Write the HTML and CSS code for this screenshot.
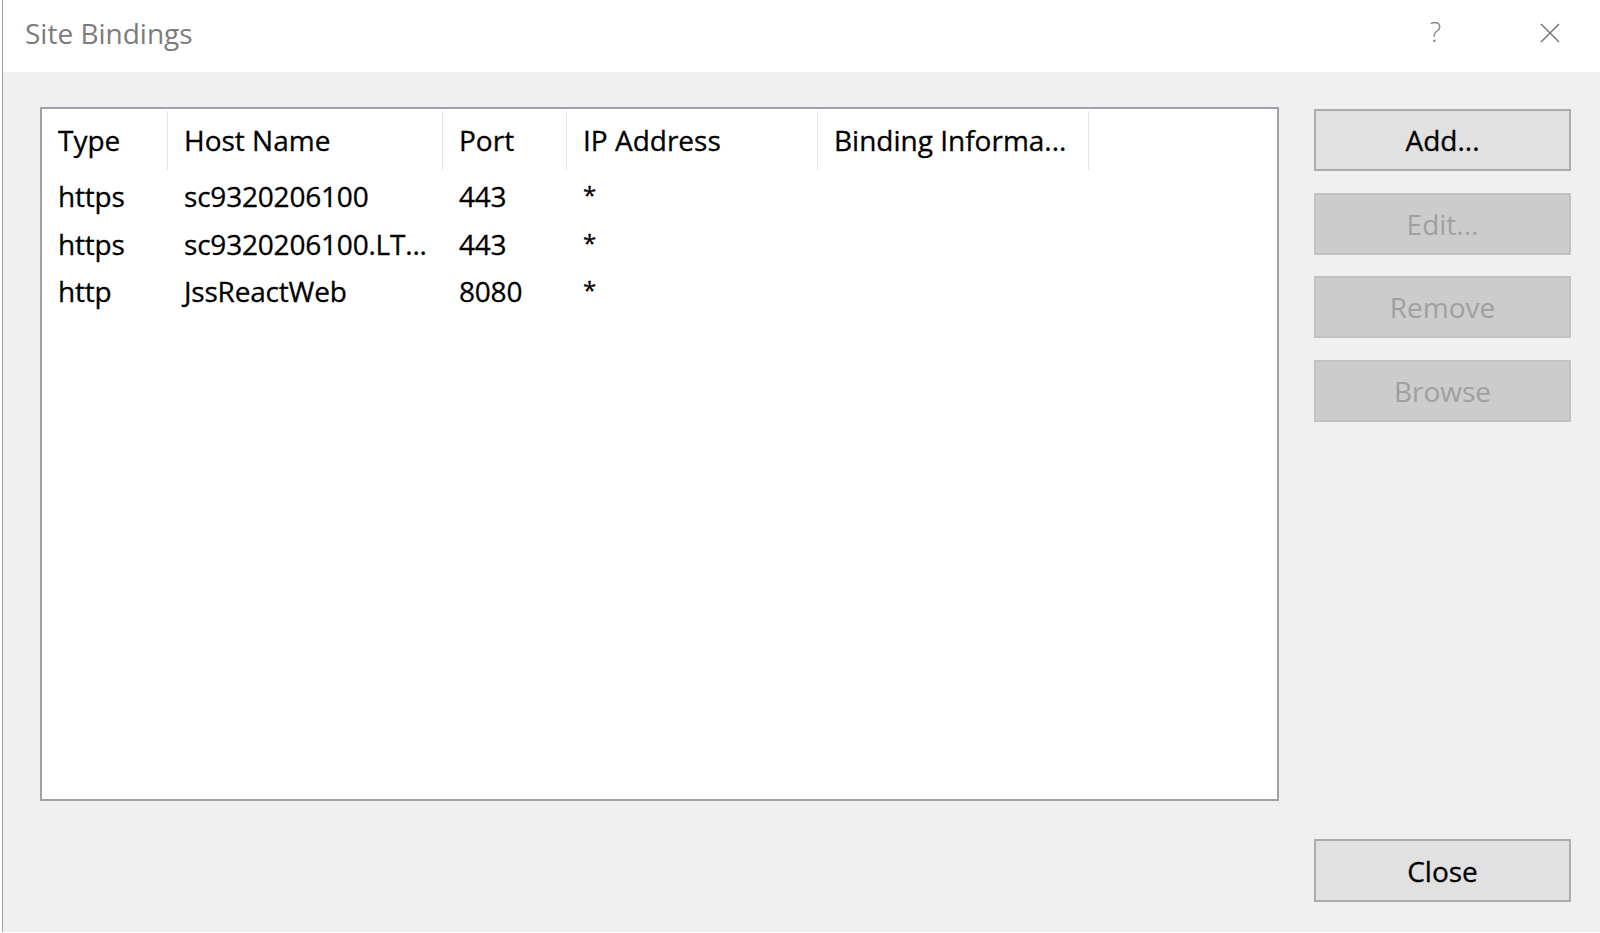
FILE: index.html
```html
<!DOCTYPE html>
<html lang="en">
<head>
<meta charset="utf-8">
<title>Site Bindings</title>
<link rel="stylesheet" href="styles.css">
</head>
<body>
<div class="window">
  <div class="titlebar">
    <div class="title">Site Bindings</div>
    <div class="title-actions">
      <span class="help">?</span>
      <span class="close-x">
        <svg width="20" height="20" viewBox="0 0 20 20"><path d="M1 1 L19 19 M19 1 L1 19" stroke="#6f6f6f" stroke-width="1.4" fill="none"/></svg>
      </span>
    </div>
  </div>
  <div class="content">
    <div class="listview">
      <div class="lv-header">
        <div class="hcell">Type</div>
        <div class="hcell">Host Name</div>
        <div class="hcell">Port</div>
        <div class="hcell">IP Address</div>
        <div class="hcell">Binding Informa...</div>
      </div>
      <div class="lv-row">
        <div class="cell">https</div>
        <div class="cell">sc9320206100</div>
        <div class="cell">443</div>
        <div class="cell"><span class="ast">*</span></div>
        <div class="cell"></div>
      </div>
      <div class="lv-row">
        <div class="cell">https</div>
        <div class="cell">sc9320206100.LT...</div>
        <div class="cell">443</div>
        <div class="cell"><span class="ast">*</span></div>
        <div class="cell"></div>
      </div>
      <div class="lv-row">
        <div class="cell">http</div>
        <div class="cell">JssReactWeb</div>
        <div class="cell">8080</div>
        <div class="cell"><span class="ast">*</span></div>
        <div class="cell"></div>
      </div>
    </div>
    <div class="buttons">
      <div class="btn">Add...</div>
      <div class="btn disabled">Edit...</div>
      <div class="btn disabled">Remove</div>
      <div class="btn disabled">Browse</div>
      <div class="btn close-btn">Close</div>
    </div>
  </div>
</div>
</body>
</html>
```
FILE: styles.css
```css
html, body {
  margin: 0;
  padding: 0;
  background: #ffffff;
}
body {
  width: 1600px;
  height: 933px;
  overflow: hidden;
  font-family: "Open Sans", "Noto Sans", "DejaVu Sans", sans-serif;
  font-size: 28px;
  color: #000;
}
.window {
  margin-left: 2px;
  border-left: 1px solid #a0a0a0;
  height: 932px;
  display: flex;
  flex-direction: column;
  background: #f0f0f0;
}
.titlebar {
  height: 72px;
  background: #ffffff;
  display: flex;
  justify-content: space-between;
  flex: none;
}
.title {
  padding-left: 22px;
  padding-top: 14px;
  line-height: 38px;
  color: #7c7c7c;
}
.title-actions {
  display: flex;
  align-items: flex-start;
  padding-top: 14px;
  padding-right: 40px;
}
.help {
  font-size: 27px;
  font-weight: 300;
  line-height: 36px;
  color: #808080;
  margin-right: 99px;
}
.close-x {
  display: block;
  padding-top: 9px;
  width: 20px;
  height: 20px;
}
.close-x svg {
  display: block;
}
.content {
  flex: 1;
  display: flex;
  padding: 35px 0 30px 37px;
  gap: 35px;
}
.listview {
  box-sizing: border-box;
  width: 1239px;
  height: 694px;
  background: #ffffff;
  border: 2px solid #9fa2a8;
  flex: none;
  -webkit-text-stroke: 0.3px #000;
}
.lv-header,
.lv-row {
  display: grid;
  grid-template-columns: 126px 275px 124px 251px 271px;
}
.lv-header {
  height: 64px;
  align-items: start;
}
.hcell {
  box-sizing: border-box;
  margin-top: 2px;
  height: 59px;
  padding: 10px 0 0 16px;
  line-height: 38px;
  border-right: 1px solid #e5e5e5;
  white-space: nowrap;
}
.lv-row {
  height: 47.5px;
}
.cell {
  padding-left: 16px;
  line-height: 47.5px;
  white-space: nowrap;
  letter-spacing: -0.2px;
}
.ast {
  display: inline-block;
  font-size: 24px;
  line-height: 24px;
  transform: translateY(-3px);
}
.buttons {
  width: 257px;
  flex: none;
  display: flex;
  flex-direction: column;
  gap: 21.5px;
  padding-top: 2px;
}
.btn {
  box-sizing: border-box;
  height: 62px;
  background: #e1e1e1;
  border: 2px solid #adadad;
  display: flex;
  align-items: center;
  justify-content: center;
  line-height: 38px;
  color: #000;
  -webkit-text-stroke: 0.3px #000;
}
.btn.disabled {
  background: #cccccc;
  border-color: #c2c2c2;
  color: #a0a0a0;
  -webkit-text-stroke: 0;
}
.close-btn {
  margin-top: auto;
  height: 63px;
}
```
